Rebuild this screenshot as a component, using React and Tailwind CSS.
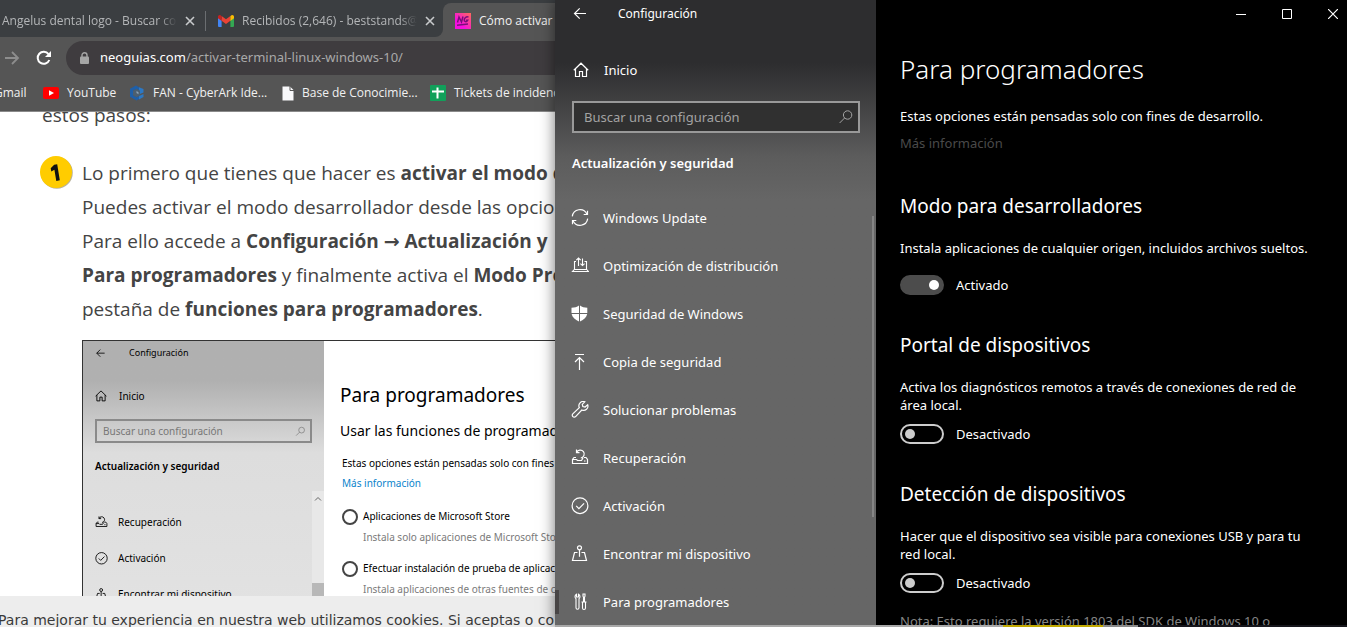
import React from "react";

function Svg({ size = 16, box = 16, className = "", children }) {
  return (
    <svg
      width={size}
      height={size}
      viewBox={`0 0 ${box} ${box}`}
      fill="none"
      stroke="currentColor"
      strokeWidth="1"
      className={`shrink-0 ${className}`}
      aria-hidden="true"
    >
      {children}
    </svg>
  );
}

const BackIcon = ({ size = 16 }) => (
  <Svg size={size}>
    <path d="M14 7.5H2.5M7.7 2.3 2.5 7.5l5.2 5.2" strokeWidth="1.2" />
  </Svg>
);

const HomeIcon = ({ size = 16 }) => (
  <Svg size={size}>
    <path d="M.8 8.2 8 1.2l7.2 7M2.5 6.8v7.7h4V9.5h3v5h4V6.8" strokeWidth="1.2" />
  </Svg>
);

const SearchIcon = ({ size = 16 }) => (
  <Svg size={size}>
    <circle cx="9.6" cy="6" r="4.2" />
    <path d="M6.6 9 1.6 14" />
  </Svg>
);

const SyncIcon = () => (
  <Svg size={18} box={18}>
    <path
      d="M1.3 7.3A7.7 7.7 0 0 1 15.9 5.1M16.7 9.7A7.7 7.7 0 0 1 2.1 11.9"
      strokeWidth="1.2"
    />
    <path d="M16.5 1.7v3.8h-3.8M1.5 15.3v-3.8h3.8" strokeWidth="1.2" />
  </Svg>
);

const DeliveryIcon = () => (
  <Svg size={18} box={18}>
    <path d="M5 4.5H3.500v8h12v-8h-2M3.300 12.500 1.500 14.500h16l-1.800-2" strokeWidth="1.1" />
    <path
      d="M7.500 9V1M5.300 3.200l2.200-2.200 2.200 2.200M11.500 1.500v7M9.400 6.600l2.100 2 2.100-2"
      strokeWidth="1.1"
    />
  </Svg>
);

const ShieldIcon = () => (
  <Svg size={18} box={18}>
    <g fill="currentColor" stroke="none">
      <path d="M8 .5V8H.5V2.700C3.500 2.700 6 2 8 .5Z" />
      <path d="M9 .5c2 1.500 4.500 2.200 7.300 2.200V8H9Z" />
      <path d="M.6 9H8v7.600C4 14.800 1.200 12.300.6 9Z" />
      <path d="M9 9h7.200c-.6 3.300-3.200 5.800-7.200 7.600Z" />
    </g>
  </Svg>
);

const BackupIcon = () => (
  <Svg size={18} box={18}>
    <path d="M4 1.500h9M8.500 17V4.500M4 9l4.500-4.500L13 9" strokeWidth="1.2" />
  </Svg>
);

const WrenchIcon = () => (
  <Svg size={18} box={18}>
    <path
      d="M16.700 3.700a4.300 4.300 0 0 1-5.900 5.300L4.600 15.600a1.900 1.900 0 0 1-2.800-2.700L8.300 6.600A4.300 4.300 0 0 1 13.800.8L11.300 3.400l.5 2.100 2.300.5Z"
      strokeWidth="1.2"
    />
  </Svg>
);

const RecoveryIcon = ({ size = 18 }) => (
  <Svg size={size} box={18}>
    <path d="M5 8.500H3L1.500 10.500v4h15v-4L15 8.500h-2" strokeWidth="1.2" />
    <path
      d="M5.600 3.400a4 4 0 1 1 4.200 5.600M5.500 .6v3h3M1.500 10.500h4l1 1h4l1.500-2.500M13 12h1.500"
      strokeWidth="1.2"
    />
  </Svg>
);

const CheckCircleIcon = ({ size = 18 }) => (
  <Svg size={size} box={18}>
    <circle cx="9" cy="8.7" r="7.9" strokeWidth="1.2" />
    <path d="m5.200 8.900 2.700 2.700 5.200-5.300" strokeWidth="1.2" />
  </Svg>
);

const FindDeviceIcon = ({ size = 18 }) => (
  <Svg size={size} box={18}>
    <circle cx="8.500" cy="2.800" r="2" strokeWidth="1.2" />
    <path d="M8.500 4.800v7M6.500 7.500h-3L1.500 15.500h14l-2-8h-3" strokeWidth="1.2" />
  </Svg>
);

const ToolsIcon = () => (
  <Svg size={18} box={18}>
    <path
      d="M5.500 1.200v2.800h2V1.200A2.700 2.700 0 0 1 8 5.700v9a1.500 1.500 0 0 1-3 0v-9a2.700 2.700 0 0 1 .5-4.500ZM12 1h2v2.200l-.5 1V9h1v6a1.500 1.500 0 0 1-3 0V9h1V4.200l-.5-1ZM10.500 9h5"
      strokeWidth="1.1"
    />
  </Svg>
);

const GmailLogo = () => (
  <svg width="16" height="12" viewBox="0 0 16 12" className="mr-1 shrink-0" aria-hidden="true">
    <path d="M0 1.800V11a1 1 0 0 0 1 1h2.600V4.500Z" fill="#4285f4" />
    <path d="M12.400 12H15a1 1 0 0 0 1-1V1.800l-3.600 2.700Z" fill="#34a853" />
    <path d="M3.600 1v4.800L8 9l4.400-3.200V1L8 4.300Z" fill="#ea4335" />
    <path d="M0 1.800v1.400l3.600 2.700V1L2.700.4C1.500-.4 0 .4 0 1.800Z" fill="#c5221f" />
    <path d="M12.400 1v4.900L16 3.200V1.800C16 .4 14.500-.4 13.300.4Z" fill="#fbbc04" />
  </svg>
);

const NgLogo = () => (
  <svg width="16" height="16" viewBox="0 0 16 16" className="shrink-0" aria-hidden="true">
    <defs>
      <linearGradient id="ng" x1="0" y1="1" x2="1" y2="0">
        <stop offset="0.3" stopColor="#f50fe0" />
        <stop offset="1" stopColor="#ff6a5a" />
      </linearGradient>
    </defs>
    <rect width="16" height="16" fill="url(#ng)" />
    <path
      d="M2.500 9.500 4 4l2.500 5L8 3.500M13.500 4.200c-2-1-4 .5-4.300 2.600-.2 2 2.300 2.700 3.500.4h-1.700M2 12.300l11-1.200"
      fill="none"
      stroke="#7a0d7c"
      strokeWidth="1.5"
    />
  </svg>
);

const CloseX = () => (
  <Svg size={10} box={10}>
    <path d="m1 1 8 8M9 1 1 9" strokeWidth="1.6" />
  </Svg>
);

function Tab({ icon, children }) {
  return (
    <>
      {icon}
      <span className="min-w-0 flex-1 overflow-hidden whitespace-nowrap [mask-image:linear-gradient(to_right,black_90%,transparent)]">
        {children}
      </span>
      <button aria-label="Cerrar pestaña" className="shrink-0 p-1 text-[#c8cacc]">
        <CloseX />
      </button>
    </>
  );
}

function Browser() {
  return (
    <section className="flex min-w-0 flex-col overflow-hidden bg-white font-['Open_Sans','Noto_Sans',sans-serif] whitespace-nowrap">
      <header className="shrink-0 bg-[#555555] text-[12px] text-[#f1f1f1]">
        <div className="flex h-[37px] items-stretch bg-[#555555] text-[#b4b6b8]">
          <div className="flex w-[443px] shrink-0 items-center rounded-br-lg bg-[#3b3e41] pt-1">
            <div className="flex w-[205px] items-center gap-1 pr-1.5 pl-0.5">
              <Tab>Angelus dental logo - Buscar con</Tab>
            </div>
            <div className="h-5 w-px bg-[#6b6e71]" />
            <div className="flex w-[237px] items-center gap-1 pr-1 pl-3">
              <Tab icon={<GmailLogo />}>Recibidos (2,646) - beststands@g</Tab>
            </div>
          </div>
          <div className="flex flex-1 bg-[#3b3e41]">
            <div className="flex flex-1 items-center gap-2 overflow-hidden bg-[#555555] pt-1 pl-3 text-[#f1f1f1] [clip-path:inset(3px_0_0_0_round_8px_0_0_0)]">
              <NgLogo />
              Cómo activar l
            </div>
          </div>
        </div>
        <div className="flex h-[42px] items-center">
          <button aria-label="Adelante" className="ml-1 text-[#8d8d8d]">
            <Svg size={16}>
              <path d="M1 8h13M8 2l6 6-6 6" strokeWidth="1.8" />
            </Svg>
          </button>
          <button aria-label="Volver a cargar" className="ml-4 text-white">
            <Svg size={16}>
              <path d="M13.300 10A6 6 0 1 1 12.500 4.200" strokeWidth="2" />
              <path d="M15 1v6H9Z" fill="currentColor" stroke="none" />
            </Svg>
          </button>
          <div className="ml-[14px] flex h-[34px] min-w-0 flex-1 items-center gap-[11px] rounded-l-full bg-[#3f3c3f] pl-[14px] font-['Noto_Sans','Open_Sans',sans-serif] text-[13px]">
            <svg width="9" height="12" viewBox="0 0 9 12" className="shrink-0" aria-hidden="true">
              <path d="M2 5V3.200a2.500 2.500 0 0 1 5 0V5" fill="none" stroke="#a6a6a6" strokeWidth="1.4" />
              <rect y="4.500" width="9" height="7.500" rx="1" fill="#a6a6a6" />
            </svg>
            <span className="text-[#a9a9a9]">
              <span className="text-white">neoguias.com</span>/activar-terminal-linux-windows-10/
            </span>
          </div>
        </div>
        <nav className="flex h-[33px] items-center border-b border-[#8a8a8a] pb-1">
          <a href="#gmail" className="-ml-1.5 w-8 shrink-0">Gmail</a>
          <a href="#youtube" className="ml-[17px] flex w-[86px] shrink-0 items-center gap-2">
            <svg width="16" height="12" viewBox="0 0 16 12" aria-hidden="true" className="shrink-0">
              <rect width="16" height="12" rx="2" fill="#f00" />
              <path d="m6 3.300 5 2.700-5 2.700Z" fill="#fff" />
            </svg>
            YouTube
          </a>
          <a href="#fan" className="flex w-[153px] shrink-0 items-center gap-2">
            <svg width="16" height="16" viewBox="0 0 16 16" aria-hidden="true" className="shrink-0">
              <path d="M7 .5 1 3.800v8l6.500 3.700 2.500-1.400V11L7.500 12.300 4 10.200V5.800L7.500 4 10 5.300V2.200Z" fill="#1f5fa8" />
              <path d="M7.500 4 11 5.800v4.400l-3.500 2.100L4 10.200V5.800Z" fill="#4c5f70" />
              <path d="M10 2.200 14.500 4v3.500L11 9V5.800l-1-.5ZM11 10.500 14.500 9v3L10 14.500V11Z" fill="#2c78c4" />
              <path d="M7.500 6 9.500 7.200v2L7.500 8Z" fill="#8ba3b8" />
            </svg>
            FAN - CyberArk Ide...
          </a>
          <a href="#base" className="flex w-[148px] shrink-0 items-center gap-2">
            <svg width="12" height="15" viewBox="0 0 12 15" aria-hidden="true" className="shrink-0">
              <path d="M.5.5h7.500L11.500 4v10.500H.5Z" fill="#f8f8fa" />
              <path d="M8 0v4.500h4" fill="none" stroke="#555" />
            </svg>
            Base de Conocimie...
          </a>
          <a href="#tickets" className="flex shrink-0 items-center gap-2">
            <svg width="16" height="16" viewBox="0 0 16 16" aria-hidden="true" className="shrink-0">
              <rect width="16" height="16" rx="1" fill="#11a05a" />
              <path d="M7.500 2.500v11M2 6.500h12" stroke="#fff" strokeWidth="2" />
            </svg>
            Tickets de incidenci
          </a>
        </nav>
      </header>

      <article className="min-h-0 flex-1 overflow-hidden text-[19px] leading-[34px] text-[#444444]">
        <p className="-mt-[14px] pl-[42px]">estos pasos:</p>
        <div className="mt-6 flex items-start gap-[9px] pl-10">
          <svg width="33" height="33" viewBox="0 0 33 33" className="shrink-0" aria-hidden="true">
            <circle cx="16.800" cy="16.800" r="16" fill="#b9b29a" />
            <circle cx="16" cy="16" r="16" fill="#ffcc00" />
            <path d="m17.200 8.300 2.600 16-3.500.6-1.900-11.200-3.100 1.700-.6-3.200 3.500-3.400Z" fill="#111" />
          </svg>
          <p>
            Lo primero que tienes que hacer es <strong>activar el modo d</strong>
            <br />
            Puedes activar el modo desarrollador desde las opcion
            <br />
            Para ello accede a <strong>Configuración</strong>{" "}
            <strong className="font-['DejaVu_Sans']">→</strong> <strong>Actualización y</strong>
            <br />
            <strong>Para programadores</strong> y finalmente activa el <strong>Modo Pro</strong>
            <br />
            pestaña de <strong>funciones para programadores</strong>.
          </p>
        </div>
        <ArticleFigure />
      </article>

      <footer className="h-[31px] shrink-0 overflow-hidden bg-[#ededed] pt-3 font-['DejaVu_Sans',Verdana,sans-serif] text-[14px] leading-6 text-[#3a3a3a]">
        <p className="-ml-0.5">
          Para mejorar tu experiencia en nuestra web utilizamos cookies. Si aceptas o co
        </p>
      </footer>
    </section>
  );
}

function MiniItem({ icon, children }) {
  return (
    <li className="flex h-9 items-center gap-[10px]">
      {icon}
      {children}
    </li>
  );
}

function MiniRadio({ title, text }) {
  return (
    <label className="mb-[10px] grid grid-cols-[16px_1fr] items-center gap-x-[5px] leading-[21px]">
      <input
        type="radio"
        name="origen"
        className="size-4 appearance-none rounded-full border-2 border-[#444444]"
      />
      <span>{title}</span>
      <span className="col-start-2 text-[#7a7a7a]">{text}</span>
    </label>
  );
}

function ArticleFigure() {
  return (
    <figure className="mt-3.5 ml-[82px] flex h-[400px] border border-r-0 border-[#333333] bg-white font-['Noto_Sans','Open_Sans',sans-serif] text-[10px] leading-4 text-black">
      <div className="flex w-[241px] shrink-0 bg-linear-to-b from-[#b0b0b0] from-10% via-[#dddddd] via-28% to-[#e6e6e6]">
        <div className="flex min-w-0 flex-1 flex-col pl-3">
          <div className="flex h-6 items-center gap-[23px] text-[9px]">
            <BackIcon size={11} />
            Configuración
          </div>
          <div className="mt-[19px] flex h-6 items-center gap-3">
            <HomeIcon size={12} />
            Inicio
          </div>
          <div className="mt-[11px] flex h-6 items-center justify-between border-2 border-[#8a8a8a] pr-1 pl-1.5 text-[#777777]">
            Buscar una configuración
            <SearchIcon size={11} />
          </div>
          <p className="mt-[15px] font-semibold">Actualización y seguridad</p>
          <ul className="mt-[30px]">
            <MiniItem icon={<RecoveryIcon size={13} />}>Recuperación</MiniItem>
            <MiniItem icon={<CheckCircleIcon size={13} />}>Activación</MiniItem>
            <MiniItem icon={<FindDeviceIcon size={13} />}>Encontrar mi dispositivo</MiniItem>
          </ul>
        </div>
        <div className="mt-[150px] flex w-3 shrink-0 flex-col items-center bg-[#e8e8e8] pt-1">
          <Svg size={8} box={8} className="text-[#666666]">
            <path d="m1 5.500 3-3 3 3" />
          </Svg>
          <div className="mt-[80px] w-full flex-1 bg-[#b8b8b8]" />
        </div>
      </div>
      <div className="pt-[38px] pl-4">
        <h3 className="text-[19px] leading-8">Para programadores</h3>
        <h4 className="mt-2 text-[14px] leading-6">Usar las funciones de programad</h4>
        <div className="pl-0.5">
          <p className="mt-3">Estas opciones están pensadas solo con fines d</p>
          <p className="mt-1 mb-[15px] text-[#0a84cc]">Más información</p>
          <MiniRadio
            title="Aplicaciones de Microsoft Store"
            text="Instala solo aplicaciones de Microsoft Stor"
          />
          <MiniRadio
            title="Efectuar instalación de prueba de aplicaci"
            text="Instala aplicaciones de otras fuentes de co"
          />
        </div>
      </div>
    </figure>
  );
}

const navItems = [
  { label: "Windows Update", Icon: SyncIcon },
  { label: "Optimización de distribución", Icon: DeliveryIcon },
  { label: "Seguridad de Windows", Icon: ShieldIcon },
  { label: "Copia de seguridad", Icon: BackupIcon },
  { label: "Solucionar problemas", Icon: WrenchIcon },
  { label: "Recuperación", Icon: RecoveryIcon },
  { label: "Activación", Icon: CheckCircleIcon },
  { label: "Encontrar mi dispositivo", Icon: FindDeviceIcon },
  { label: "Para programadores", Icon: ToolsIcon, active: true },
];

function Sidebar() {
  return (
    <aside className="flex w-[321px] shrink-0 flex-col bg-linear-to-b from-[#2d2d2f] from-10% via-[#5c5c5c] via-25% to-[#666666] to-32%">
      <div className="flex h-[27px] items-center gap-[30px] pl-[17px] text-[12px]">
        <button aria-label="Atrás">
          <BackIcon />
        </button>
        Configuración
      </div>
      <a href="#inicio" className="mt-[31px] flex h-6 items-center gap-[15px] pl-[18px]">
        <HomeIcon />
        Inicio
      </a>
      <label className="mt-[19px] mr-4 ml-[17px] flex h-8 items-center border-2 border-[#999999] bg-[#303030] pr-1 pl-2.5 text-[#a3a3a3]">
        <input
          type="text"
          aria-label="Buscar una configuración"
          placeholder="Buscar una configuración"
          className="min-w-0 flex-1 bg-transparent outline-none placeholder:text-[#a3a3a3]"
        />
        <SearchIcon />
      </label>
      <h2 className="mt-[21px] pl-[17px] font-semibold">Actualización y seguridad</h2>
      <div className="mt-[22px] flex min-h-0 flex-1 overflow-hidden">
        <nav className="min-w-0 flex-1">
          {navItems.map(({ label, Icon, active }) => (
            <a key={label} href="#seccion" className="flex h-12 items-center">
              <span className={active ? "h-6 w-1 bg-[#484545]" : "h-6 w-1"} />
              <span className="mr-[14px] ml-3">
                <Icon />
              </span>
              {label}
            </a>
          ))}
        </nav>
        <div className="mt-[22px] mr-0.5 h-[301px] w-0.5 bg-[#858585]" />
      </div>
    </aside>
  );
}

function Toggle({ label, on }) {
  return (
    <label className="mt-[10px] flex h-5 items-center gap-3">
      <input
        type="checkbox"
        role="switch"
        defaultChecked={on}
        className="flex h-5 w-11 appearance-none items-center rounded-full border-2 border-[#cccccc] px-[3px] before:size-[10px] before:rounded-full before:bg-[#cccccc] checked:justify-end checked:border-[#4c4c4c] checked:bg-[#4c4c4c] checked:before:bg-white"
      />
      {label}
    </label>
  );
}

function Section({ title, text, children }) {
  return (
    <section className="mb-9">
      <h2 className="mb-[19px] text-[19px] leading-7">{title}</h2>
      <p>{text}</p>
      {children}
    </section>
  );
}

function Content() {
  return (
    <div className="flex min-w-0 flex-1 flex-col overflow-hidden bg-black">
      <div className="flex h-[27px] shrink-0 justify-end">
        <button aria-label="Minimizar" className="flex w-[46px] items-center justify-center">
          <Svg size={10} box={10}>
            <path d="M0 5.500h10" />
          </Svg>
        </button>
        <button aria-label="Maximizar" className="flex w-[46px] items-center justify-center">
          <Svg size={10} box={10}>
            <path d="M.5.5h9v9h-9Z" />
          </Svg>
        </button>
        <button aria-label="Cerrar" className="flex w-[37px] items-center pl-[18px]">
          <Svg size={10} box={10}>
            <path d="m0 0 10 10M10 0 0 10" strokeWidth="1.2" />
          </Svg>
        </button>
      </div>
      <main className="px-6 pt-[22px]">
        <h1 className="text-[26px] leading-10 font-light">Para programadores</h1>
        <p className="mt-[18px]">Estas opciones están pensadas solo con fines de desarrollo.</p>
        <a href="#mas" className="mt-[9px] mb-10 block text-[#4a4a4a]">
          Más información
        </a>
        <Section
          title="Modo para desarrolladores"
          text="Instala aplicaciones de cualquier origen, incluidos archivos sueltos."
        >
          <div className="pt-2">
            <Toggle label="Activado" on />
          </div>
        </Section>
        <Section
          title="Portal de dispositivos"
          text="Activa los diagnósticos remotos a través de conexiones de red de área local."
        >
          <Toggle label="Desactivado" />
        </Section>
        <Section
          title="Detección de dispositivos"
          text="Hacer que el dispositivo sea visible para conexiones USB y para tu red local."
        >
          <Toggle label="Desactivado" />
          <p className="mt-[19px] whitespace-nowrap text-[#858585]">
            Nota: Esto requiere la versión 1803 del SDK de Windows 10 o
          </p>
        </Section>
      </main>
    </div>
  );
}

export default function App() {
  return (
    <div className="grid h-screen grid-cols-[555fr_792fr] grid-rows-[minmax(0,1fr)] overflow-hidden bg-black font-['Noto_Sans','Open_Sans',sans-serif]">
      <Browser />
      <div className="relative flex min-w-0 flex-col text-[13px] leading-[18px] text-white shadow-[0_0_14px_rgba(0,0,0,0.55)]">
        <div className="flex min-h-0 flex-1">
          <Sidebar />
          <Content />
        </div>
        <div className="grid h-0.5 shrink-0 grid-cols-[448fr_100fr_35fr_209fr]">
          <div className="bg-[#a8a8a8]" />
          <div className="bg-[#c0a800]" />
          <div className="bg-[#8a8a8a]" />
          <div className="bg-[#16161c]" />
        </div>
      </div>
    </div>
  );
}
